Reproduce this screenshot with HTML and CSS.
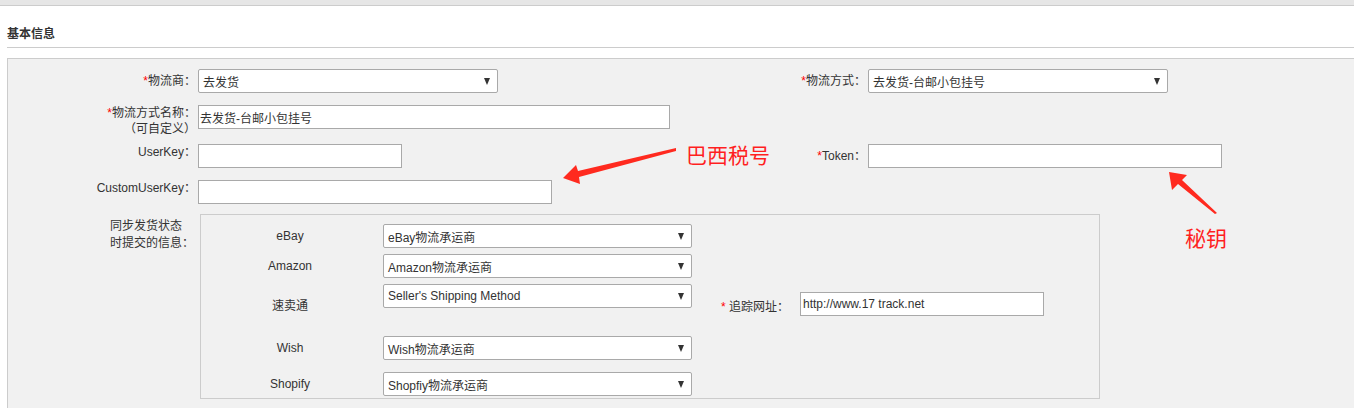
FILE: index.html
```html
<!DOCTYPE html>
<html lang="zh-CN">
<head>
  <meta charset="UTF-8">
  <title>基本信息</title>
  <link rel="stylesheet" href="styles.css">
</head>
<body>
  <div class="topbar"></div>

  <div class="page">
    <h3 class="section-title">基本信息</h3>

    <div class="panel">
      <div class="form-grid">
        <label class="label"><span class="req">*</span>物流商：</label>
        <div class="field"><div class="select w300"><span>去发货</span><i class="caret"></i></div></div>
        <label class="label"><span class="req">*</span>物流方式：</label>
        <div class="field"><div class="select w300"><span>去发货-台邮小包挂号</span><i class="caret"></i></div></div>

        <label class="label label-top"><span class="req">*</span>物流方式名称：<br>（可自定义）</label>
        <div class="field"><input class="input w472" type="text" value="去发货-台邮小包挂号"></div>
        <div></div>
        <div></div>

        <label class="label label-top">UserKey：</label>
        <div class="field"><input class="input w204" type="text"></div>
        <label class="label"><span class="req">*</span>Token：</label>
        <div class="field"><input class="input w354" type="text"></div>

        <label class="label label-top">CustomUserKey：</label>
        <div class="field"><input class="input w354" type="text"></div>
        <div></div>
        <div></div>

        <div class="label sync-label"><span>同步发货状态<br>时提交的信息：</span></div>
        <div class="sync-box">
          <div class="sync-name">eBay</div>
          <div class="select w309"><span>eBay物流承运商</span><i class="caret"></i></div>
          <div></div>

          <div class="sync-name">Amazon</div>
          <div class="select w309"><span>Amazon物流承运商</span><i class="caret"></i></div>
          <div></div>

          <div class="sync-name sync-name-low">速卖通</div>
          <div class="select w309"><span>Seller's Shipping Method</span><i class="caret"></i></div>
          <div class="track">
            <label class="track-label"><span class="req">*</span> 追踪网址：</label>
            <input class="input w244 input-url" type="text" value="http://www.17 track.net">
          </div>

          <div class="sync-name">Wish</div>
          <div class="select w309"><span>Wish物流承运商</span><i class="caret"></i></div>
          <div></div>

          <div class="sync-name">Shopify</div>
          <div class="select w309"><span>Shopfiy物流承运商</span><i class="caret"></i></div>
          <div></div>
        </div>
      </div>
    </div>
  </div>

  <!-- annotations drawn on top of the screenshot -->
  <svg class="marks" width="1354" height="408" viewBox="0 0 1354 408">
    <polygon points="563,178 576,165 578,171 676,148 676,151 579,177 580,184" fill="#ff2a1f"/>
    <polygon points="1169,172 1187,175 1182,180 1217,213 1215,214 1178,184 1172,190" fill="#ff2a1f"/>
  </svg>
  <div class="note note-tax">巴西税号</div>
  <div class="note note-key">秘钥</div>
</body>
</html>
```

FILE: styles.css
```css
body {
  margin: 0;
  background: #fff;
  color: #333;
  font-family: "Liberation Sans", Arial, "Noto Sans CJK SC", sans-serif;
  font-size: 12px;
  position: relative;
  overflow: hidden;
}

.topbar {
  height: 5px;
  background: #e6e6e6;
  border-bottom: 1px solid #ccc;
}

.page {
  padding-left: 7px;
}

.section-title {
  margin: 0 0 10px 0;
  padding: 20px 0 5px 0;
  line-height: 16px;
  font-size: 12px;
  font-weight: bold;
  color: #333;
  border-bottom: 1px solid #ccc;
}

.panel {
  background: #f1f1f1;
  border-top: 1px solid #ccc;
  border-left: 1px solid #ccc;
  padding: 10px 0 30px 0;
}

.form-grid {
  display: grid;
  grid-template-columns: 190px 478px 192px 1fr;
  grid-template-rows: 36px 39px 36px 34px auto;
}

.label {
  text-align: right;
  padding-right: 2px;
  line-height: 24px;
  color: #333;
}

.label-top {
  line-height: 16px;
}

.req {
  color: #f00;
}

.select {
  box-sizing: border-box;
  height: 24px;
  display: flex;
  align-items: center;
  justify-content: space-between;
  padding: 0 7px 0 4px;
  background: #fff;
  border: 1px solid #a9a9a9;
  border-radius: 2px;
  color: #333;
}

.caret {
  width: 0;
  height: 0;
  border-left: 3.5px solid transparent;
  border-right: 3.5px solid transparent;
  border-top: 7px solid #333;
}

.input {
  box-sizing: border-box;
  height: 24px;
  margin: 0;
  padding: 0 1px;
  background: #fff;
  border: 1px solid #a9a9a9;
  font-family: inherit;
  font-size: 12px;
  color: #333;
  outline: none;
}

.w204 { width: 204px; }
.w244 { width: 244px; }
.w300 { width: 300px; }
.w309 { width: 309px; }
.w354 { width: 354px; }
.w472 { width: 472px; }

.sync-label {
  padding: 4px 4px 0 0;
  line-height: 17px;
}

.sync-label span {
  display: inline-block;
  text-align: left;
}

.sync-box {
  grid-column: 2 / 5;
  justify-self: start;
  margin-left: 2px;
  width: 900px;
  box-sizing: border-box;
  border: 1px solid #ccc;
  padding: 9px 0 2px 0;
  display: grid;
  grid-template-columns: 182px 309px 1fr;
  grid-template-rows: 30px 30px 52px 36px 24px;
}

.sync-name {
  padding-right: 4px;
  text-align: center;
  line-height: 24px;
}

.sync-name-low {
  padding-top: 14px;
  line-height: 16px;
}

.track {
  display: flex;
  padding-top: 8px;
}

.track-label {
  box-sizing: border-box;
  width: 108px;
  padding: 7px 0 0 29px;
  line-height: 16px;
}

.input-url {
  padding-left: 2px;
}

.marks {
  position: absolute;
  top: 0;
  left: 0;
  pointer-events: none;
}

.note {
  position: absolute;
  color: #ff1f1f;
  font-family: "Noto Sans CJK SC", sans-serif;
  font-size: 21px;
  line-height: 24px;
}

.note-tax {
  left: 686px;
  top: 142px;
}

.note-key {
  left: 1185px;
  top: 225px;
}
```
